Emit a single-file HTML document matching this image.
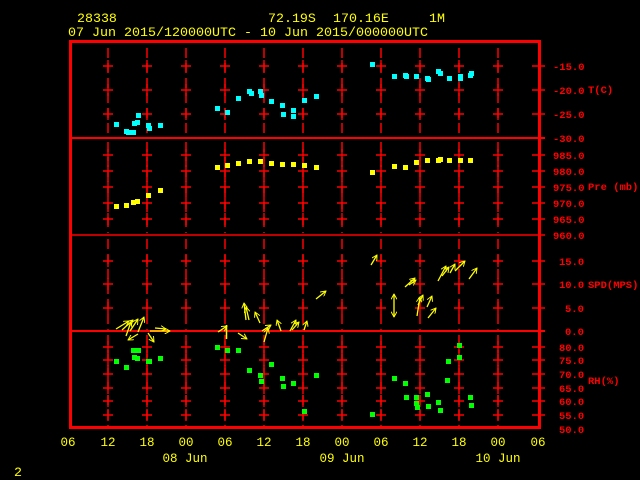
<!DOCTYPE html>
<html><head><meta charset="utf-8"><style>
html,body{margin:0;padding:0;background:#000;width:640px;height:480px;overflow:hidden}
svg{display:block}
text{font-family:"Liberation Mono",monospace;font-size:13.3px}
.y{fill:#ffff00}.r{fill:#ff0000}
.r text{font-size:10.5px;font-weight:bold}
.b text{font-size:12.5px}
</style></head><body>
<svg width="640" height="480" viewBox="0 0 640 480" xmlns="http://www.w3.org/2000/svg">
<defs>
<marker id="ah" viewBox="0 0 10 10" refX="9" refY="5" markerWidth="6" markerHeight="6" orient="auto" markerUnits="userSpaceOnUse">
<path d="M0,0 L9,5 L0,10" fill="none" stroke="#ffff00" stroke-width="1.6"/>
</marker>
<g id="col" stroke="#ff0000" stroke-width="1.5">
<line x1="0" y1="48" x2="0" y2="136" stroke-dasharray="10 5"/>
<line x1="0" y1="142" x2="0" y2="233" stroke-dasharray="10 5"/>
<line x1="0" y1="239" x2="0" y2="330" stroke-dasharray="10 5"/>
<line x1="0" y1="335" x2="0" y2="427" stroke-dasharray="10 5"/>
<g stroke-width="1.4">
<path d="M-5,66H5M0,60V72M-5,90H5M0,84V96M-5,114H5M0,108V120"/>
<path d="M-5,155H5M0,149V161M-5,171H5M0,165V177M-5,187H5M0,181V193M-5,203H5M0,197V209M-5,219H5M0,213V225"/>
<path d="M-5,261H5M0,255V267M-5,284H5M0,278V290M-5,308H5M0,302V314"/>
<path d="M-5,347H5M0,341V353M-5,360H5M0,354V366M-5,374H5M0,368V380M-5,388H5M0,382V394M-5,401H5M0,395V407M-5,415H5M0,409V421"/>
</g>
</g>
</defs>

<use href="#col" x="108"/><use href="#col" x="147"/><use href="#col" x="186"/><use href="#col" x="225"/>
<use href="#col" x="264"/><use href="#col" x="303"/><use href="#col" x="342"/><use href="#col" x="381"/>
<use href="#col" x="420"/><use href="#col" x="459"/><use href="#col" x="498"/>

<g stroke="#ff0000" stroke-width="1.4">
<path d="M532,66H545M532,90H545M532,114H545M532,155H545M532,171H545M532,187H545M532,203H545M532,219H545M532,261H545M532,284H545M532,308H545M532,347H545M532,360H545M532,374H545M532,388H545M532,401H545M532,415H545"/>
<line x1="70" y1="138" x2="545" y2="138" stroke-width="2"/>
<line x1="70" y1="235" x2="545" y2="235" stroke-width="1.5"/>
<line x1="70" y1="331" x2="545" y2="331" stroke-width="2"/>
</g>
<rect x="70.5" y="41.5" width="469" height="386" fill="none" stroke="#ff0000" stroke-width="3"/>

<g fill="#00ffff">
<rect x="114" y="122" width="5" height="5"/><rect x="124" y="129" width="5" height="5"/><rect x="126" y="130" width="5" height="5"/><rect x="131" y="130" width="5" height="5"/><rect x="132" y="121" width="5" height="5"/><rect x="135" y="120" width="5" height="5"/><rect x="136" y="113" width="5" height="5"/><rect x="146" y="123" width="5" height="5"/><rect x="147" y="126" width="5" height="5"/><rect x="158" y="123" width="5" height="5"/>
<rect x="215" y="106" width="5" height="5"/><rect x="225" y="110" width="5" height="5"/><rect x="236" y="96" width="5" height="5"/><rect x="247" y="89" width="5" height="5"/><rect x="249" y="91" width="5" height="5"/><rect x="258" y="89" width="5" height="5"/><rect x="259" y="93" width="5" height="5"/><rect x="269" y="99" width="5" height="5"/><rect x="280" y="103" width="5" height="5"/><rect x="281" y="112" width="5" height="5"/><rect x="291" y="108" width="5" height="5"/><rect x="291" y="114" width="5" height="5"/><rect x="302" y="98" width="5" height="5"/><rect x="314" y="94" width="5" height="5"/>
<rect x="370" y="62" width="5" height="5"/><rect x="392" y="74" width="5" height="5"/><rect x="403" y="73" width="5" height="5"/><rect x="404" y="74" width="5" height="5"/><rect x="414" y="74" width="5" height="5"/><rect x="425" y="76" width="5" height="5"/><rect x="426" y="77" width="5" height="5"/><rect x="436" y="69" width="5" height="5"/><rect x="438" y="71" width="5" height="5"/><rect x="447" y="76" width="5" height="5"/><rect x="458" y="76" width="5" height="5"/><rect x="458" y="74" width="5" height="5"/><rect x="468" y="73" width="5" height="5"/><rect x="469" y="71" width="5" height="5"/>
</g>
<g fill="#ffff00">
<rect x="114" y="204" width="5" height="5"/><rect x="124" y="203" width="5" height="5"/><rect x="131" y="200" width="5" height="5"/><rect x="135" y="199" width="5" height="5"/><rect x="146" y="193" width="5" height="5"/><rect x="158" y="188" width="5" height="5"/>
<rect x="215" y="165" width="5" height="5"/><rect x="225" y="163" width="5" height="5"/><rect x="236" y="161" width="5" height="5"/><rect x="247" y="159" width="5" height="5"/><rect x="258" y="159" width="5" height="5"/><rect x="269" y="161" width="5" height="5"/><rect x="280" y="162" width="5" height="5"/><rect x="291" y="162" width="5" height="5"/><rect x="302" y="163" width="5" height="5"/><rect x="314" y="165" width="5" height="5"/>
<rect x="370" y="170" width="5" height="5"/><rect x="392" y="164" width="5" height="5"/><rect x="403" y="165" width="5" height="5"/><rect x="414" y="160" width="5" height="5"/><rect x="425" y="158" width="5" height="5"/><rect x="436" y="158" width="5" height="5"/><rect x="438" y="157" width="5" height="5"/><rect x="447" y="158" width="5" height="5"/><rect x="458" y="158" width="5" height="5"/><rect x="468" y="158" width="5" height="5"/>
</g>
<g fill="#00ff00">
<rect x="114" y="359" width="5" height="5"/><rect x="124" y="365" width="5" height="5"/><rect x="131" y="348" width="5" height="5"/><rect x="132" y="355" width="5" height="5"/><rect x="135" y="356" width="5" height="5"/><rect x="136" y="348" width="5" height="5"/><rect x="146" y="359" width="5" height="5"/><rect x="147" y="359" width="5" height="5"/><rect x="158" y="356" width="5" height="5"/>
<rect x="215" y="345" width="5" height="5"/><rect x="225" y="348" width="5" height="5"/><rect x="236" y="348" width="5" height="5"/><rect x="247" y="368" width="5" height="5"/><rect x="258" y="373" width="5" height="5"/><rect x="259" y="379" width="5" height="5"/><rect x="269" y="362" width="5" height="5"/><rect x="280" y="376" width="5" height="5"/><rect x="281" y="384" width="5" height="5"/><rect x="291" y="381" width="5" height="5"/><rect x="302" y="409" width="5" height="5"/><rect x="314" y="373" width="5" height="5"/>
<rect x="370" y="412" width="5" height="5"/><rect x="392" y="376" width="5" height="5"/><rect x="403" y="381" width="5" height="5"/><rect x="404" y="395" width="5" height="5"/><rect x="414" y="395" width="5" height="5"/><rect x="425" y="392" width="5" height="5"/><rect x="414" y="401" width="5" height="5"/><rect x="415" y="405" width="5" height="5"/><rect x="426" y="404" width="5" height="5"/><rect x="436" y="400" width="5" height="5"/><rect x="438" y="408" width="5" height="5"/><rect x="445" y="378" width="5" height="5"/><rect x="446" y="359" width="5" height="5"/><rect x="457" y="355" width="5" height="5"/><rect x="457" y="343" width="5" height="5"/><rect x="468" y="395" width="5" height="5"/><rect x="469" y="403" width="5" height="5"/>
</g>
<g stroke="#ffff00" stroke-width="1.3" fill="none" marker-end="url(#ah)">
<line x1="116" y1="329" x2="129" y2="321"/><line x1="122" y1="330" x2="133" y2="320"/><line x1="126" y1="336" x2="131" y2="322"/><line x1="130" y1="331" x2="138" y2="319"/><line x1="138" y1="332" x2="144" y2="317"/><line x1="138" y1="334" x2="128" y2="340"/><line x1="148" y1="333" x2="154" y2="342"/><line x1="150" y1="331" x2="170" y2="331"/><line x1="155" y1="328" x2="166" y2="329"/>
<line x1="218" y1="332" x2="227" y2="326"/><line x1="238" y1="333" x2="247" y2="339"/><line x1="246" y1="320" x2="244" y2="303"/><line x1="249" y1="320" x2="246" y2="307"/><line x1="260" y1="323" x2="255" y2="312"/><line x1="264" y1="342" x2="268" y2="328"/><line x1="262" y1="331" x2="271" y2="325"/><line x1="281" y1="331" x2="277" y2="320"/><line x1="290" y1="331" x2="296" y2="320"/><line x1="292" y1="330" x2="299" y2="322"/><line x1="304" y1="330" x2="307" y2="321"/><line x1="316" y1="299" x2="326" y2="291"/>
<line x1="371" y1="265" x2="377" y2="255"/><line x1="394" y1="305" x2="394" y2="294"/><line x1="394" y1="305" x2="394" y2="317"/><line x1="405" y1="287" x2="415" y2="278"/><line x1="409" y1="285" x2="416" y2="280"/><line x1="417" y1="316" x2="420" y2="297"/><line x1="418" y1="305" x2="423" y2="295"/><line x1="427" y1="307" x2="432" y2="296"/><line x1="428" y1="318" x2="436" y2="308"/><line x1="438" y1="281" x2="446" y2="266"/><line x1="442" y1="276" x2="449" y2="267"/><line x1="450" y1="273" x2="455" y2="264"/><line x1="455" y1="271" x2="465" y2="261"/><line x1="469" y1="279" x2="477" y2="268"/>
</g>
<line x1="226.5" y1="325" x2="226.5" y2="339" stroke="#ffff00" stroke-width="1.5"/>

<text class="y" x="77" y="22">28338</text>
<text class="y" x="268" y="22">72.19S</text>
<text class="y" x="333" y="22">170.16E</text>
<text class="y" x="429" y="22">1M</text>
<text class="y" x="68" y="36" textLength="360" lengthAdjust="spacingAndGlyphs">07 Jun 2015/120000UTC - 10 Jun 2015/000000UTC</text>

<g class="r">
<text x="553" y="70">-15.0</text><text x="553" y="94">-20.0</text><text x="553" y="118">-25.0</text><text x="553" y="142">-30.0</text>
<text x="588" y="93">T(C)</text>
<text x="553" y="159">985.0</text><text x="553" y="175">980.0</text><text x="553" y="191">975.0</text><text x="553" y="207">970.0</text><text x="553" y="223">965.0</text><text x="553" y="239">960.0</text>
<text x="588" y="190">Pre (mb)</text>
<text x="559" y="265">15.0</text><text x="559" y="288">10.0</text><text x="565" y="312">5.0</text><text x="565" y="335">0.0</text>
<text x="588" y="288">SPD(MPS)</text>
<text x="559" y="351">80.0</text><text x="559" y="364">75.0</text><text x="559" y="378">70.0</text><text x="559" y="392">65.0</text><text x="559" y="405">60.0</text><text x="559" y="419">55.0</text><text x="559" y="433">50.0</text>
<text x="588" y="384">RH(%)</text>
</g>

<g class="y b" text-anchor="middle">
<text x="68" y="446">06</text><text x="108" y="446">12</text><text x="147" y="446">18</text><text x="186" y="446">00</text><text x="225" y="446">06</text><text x="264" y="446">12</text><text x="303" y="446">18</text><text x="342" y="446">00</text><text x="381" y="446">06</text><text x="420" y="446">12</text><text x="459" y="446">18</text><text x="498" y="446">00</text><text x="538" y="446">06</text>
<text x="185" y="462">08 Jun</text><text x="342" y="462">09 Jun</text><text x="498" y="462">10 Jun</text>
</g>
<text class="y" x="14" y="476" font-size="12">2</text>
</svg>
</body></html>
